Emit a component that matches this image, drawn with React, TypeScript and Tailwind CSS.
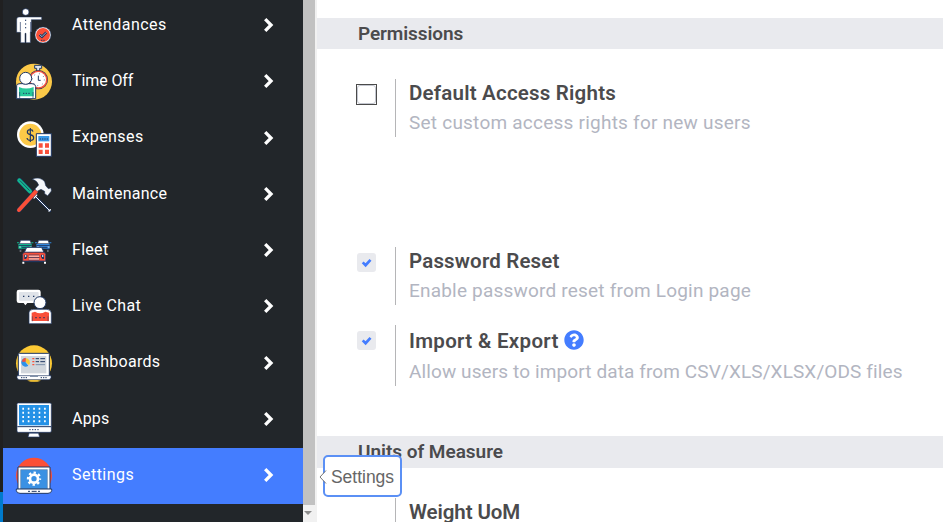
import type { ReactNode } from "react";
import { FaQuestionCircle } from "react-icons/fa";

const NAVY = "#1f3763";

const Icon = ({ top, children }: { top: number; children: ReactNode }) => (
  <svg viewBox={`48 ${top} 108 108`} className="h-9 w-9 shrink-0 overflow-visible">
    {children}
  </svg>
);

const AttendanceIcon = () => (
  <Icon top={24}>
    <circle cx="77" cy="36" r="10" fill="#fff" stroke={NAVY} strokeWidth="2" />
    <path d="M57 51H125V59H94V96H91V128H78V100H75V128H62V97H50V59Q50 51 57 51Z" fill="#fff" stroke={NAVY} strokeWidth="1.5" strokeLinejoin="round" />
    <path d="M61 66V94M92 66V96" stroke={NAVY} strokeWidth="2" />
    <path d="M77 59V63M77 70V74M77 81V85" stroke={NAVY} strokeWidth="3" />
    <circle cx="129" cy="105" r="24" fill="#fff" stroke={NAVY} strokeWidth="1.5" />
    <circle cx="129" cy="105" r="21" fill="#fb4f37" />
    <path d="M119 104L126 110L139 97" fill="none" stroke={NAVY} strokeWidth="8" />
    <path d="M119 104L126 110L139 97" fill="none" stroke="#bfc6ce" strokeWidth="2.5" />
    <path d="M123 121H135" stroke={NAVY} strokeWidth="3" strokeDasharray="3 2" />
  </Icon>
);

const TimeOffIcon = () => (
  <Icon top={193}>
    <circle cx="102" cy="246" r="54" fill="#fcc948" />
    <path d="M104 197H125V206H119V214H110V206H104Z" fill="#dfe5ef" stroke={NAVY} strokeWidth="3" />
    <circle cx="115" cy="240" r="29" fill={NAVY} />
    <circle cx="115" cy="240" r="27.5" fill="#f5523d" />
    <circle cx="115" cy="240" r="23" fill="#fff" />
    <path d="M115 228V242H122" fill="none" stroke={NAVY} strokeWidth="3" />
    <circle cx="115" cy="240" r="18" fill="none" stroke={NAVY} strokeWidth="3" strokeDasharray="2 12.1" />
    <path d="M50 297V258Q50 252 60 252H96Q106 252 107 260V297Z" fill="#fff" stroke={NAVY} strokeWidth="3" />
    <path d="M57 262Q78 271 101 262V290H57Z" fill="#27c99b" />
    <path d="M59 277V296M99 277V296" stroke={NAVY} strokeWidth="2" />
    <path d="M69 281H89" stroke={NAVY} strokeWidth="3" strokeDasharray="4 4" />
    <circle cx="77" cy="236" r="18" fill="#fff" stroke={NAVY} strokeWidth="3" />
  </Icon>
);

const ExpensesIcon = () => (
  <Icon top={32}>
    <circle cx="91" cy="73" r="40" fill="#fff" />
    <circle cx="91" cy="73" r="33" fill="#fcc948" />
    <path d="M99 64Q98 58 91 58Q82 58 82 65Q82 71 91 73Q101 75 101 82Q101 90 91 90Q82 90 81 83M91 53V95" fill="none" stroke={NAVY} strokeWidth="3.5" />
    <path d="M109 70H154V138H109Z" fill="#fff" stroke={NAVY} strokeWidth="3" />
    <path d="M115 77H148V93H115Z" fill="#3899e8" />
    <path d="M119 86H144" stroke={NAVY} strokeWidth="3" strokeDasharray="4 3" />
    <path d="M116 99H128V112H116ZM135 99H147V112H135ZM116 118H128V131H116ZM135 118H147V131H135Z" fill="#f9503b" />
  </Icon>
);

const MaintenanceIcon = () => (
  <Icon top={201}>
    <g strokeLinecap="round" fill="none">
      <path d="M58 211L90 244" stroke={NAVY} strokeWidth="15" />
      <path d="M58 211L90 244" stroke="#12b98d" strokeWidth="12" />
      <path d="M60 212L88 241" stroke={NAVY} strokeWidth="2.5" />
      <path d="M103 256L150 303" stroke={NAVY} strokeWidth="7" />
      <path d="M103 256L148 301" stroke="#fff" strokeWidth="3" />
      <path d="M102 264L110 255M147 303L151 299" stroke="#fff" strokeWidth="4" />
      <path d="M57 300L108 244" stroke={NAVY} strokeWidth="14" />
      <path d="M57 300L108 244" stroke="#fb4f37" strokeWidth="12" />
    </g>
    <path d="M97 208Q119 198 134 215L137 227L145 236L153 234L154 243L143 257L134 251V244L123 238L111 244L105 237L116 225Q111 211 97 208Z" fill="#f5f7fa" stroke={NAVY} strokeWidth="1.5" />
  </Icon>
);

const SmallCar = ({ x, color }: { x: number; color: string }) => (
  <g transform={`translate(${x} 0)`}>
    <path d="M7 71L11 61H39L43 71Z" fill="#fff" stroke={NAVY} strokeWidth="2" />
    <path d="M4 72H44V86H4ZM0 67H6V70H0ZM43 67H49V70H43Z" fill={color} />
    <path d="M4 77H44M14 83H38M7 89H15M35 89H43" stroke={NAVY} strokeWidth="3" />
    <path d="M6 81H12M38 81H44M8 93H13M36 93H41" stroke="#fff" strokeWidth="2" />
  </g>
);

const FleetIcon = () => (
  <Icon top={39}>
    <SmallCar x={51} color="#12b98d" />
    <SmallCar x={105} color="#3288df" />
    <path d="M73 97L80 82H125L132 97Z" fill="#fff" stroke={NAVY} strokeWidth="3" />
    <path d="M68 103Q68 97 76 97H129Q137 97 137 103V123H68Z" fill="#f9503b" stroke={NAVY} strokeWidth="2" />
    <path d="M86 105H118M85 112.500H119M86 120H118" stroke={NAVY} strokeWidth="2" />
    <path d="M87 108.500H117M87 117H117" stroke="#fff" strokeWidth="2.5" />
    <path d="M73 104H82V111L78 117H73ZM123 104H132V117H127L123 111Z" fill={NAVY} />
    <path d="M75 106H79V110H75ZM126 106H130V110H126ZM67 125H73V131H67ZM132 125H138V131H132Z" fill="#fff" />
    <path d="M73 125H132" stroke={NAVY} strokeWidth="3" />
  </Icon>
);

const ChatIcon = () => (
  <Icon top={208}>
    <path d="M57 210H115Q122 210 122 217V243Q122 250 115 250H82L76 257L71 250H57Q50 250 50 243V217Q50 210 57 210Z" fill="#fff" />
    <rect x="57" y="217" width="59" height="26" rx="3" fill="#dfe3e9" />
    <path d="M69 230H103" stroke={NAVY} strokeWidth="4" strokeDasharray="4 11" />
    <path d="M87 312V279Q88 270 99 269H141Q153 270 154 280V312Z" fill="#fff" stroke={NAVY} strokeWidth="2" />
    <path d="M95 279L105 276Q120 285 136 276L147 279V304H95Z" fill="#f9503b" />
    <path d="M97 290V305M144 290V305" stroke={NAVY} strokeWidth="1.5" />
    <path d="M106 294H136" stroke={NAVY} strokeWidth="4" strokeDasharray="4 8" />
    <circle cx="120" cy="249" r="18" fill="#fff" stroke={NAVY} strokeWidth="3" />
  </Icon>
);

const DashboardIcon = () => (
  <Icon top={47}>
    <circle cx="102" cy="99" r="54" fill="#fcc934" />
    <rect x="55" y="69" width="93" height="70" rx="3" fill="#fff" stroke={NAVY} strokeWidth="3" />
    <path d="M63 77H139V129H63Z" fill="#d1d6dc" />
    <path d="M77 96V83A13 13 0 1 0 85 106Z" fill="#2f91e8" />
    <path d="M77 96V83A13 13 0 0 1 87 104Z" fill="#fcc934" />
    <path d="M77 82A14 14 0 0 0 66 94H77Z" fill="#fb4f37" />
    <path d="M97 85H103M97 94H103M97 103H103" stroke="#fb4f37" strokeWidth="4" />
    <path d="M107 85H117M107 94H117M121 85H135M121 94H135" stroke={NAVY} strokeWidth="3" />
    <path d="M107 103H135" stroke="#7a8fa9" strokeWidth="3" />
    <path d="M51 136H153V142Q152 148 145 148H59Q52 148 51 142Z" fill="#fff" stroke={NAVY} strokeWidth="2" />
    <path d="M90 136H114V140H90Z" fill="#8292ab" />
    <path d="M63 142H81M122 142H143" stroke={NAVY} strokeWidth="3" strokeDasharray="4 3" />
    <path d="M82 151H123Q102 158 82 151" fill="#fcc934" />
  </Icon>
);

const AppsIcon = () => (
  <Icon top={216}>
    <rect x="51" y="219" width="103" height="88" rx="4" fill="#fff" stroke={NAVY} strokeWidth="2" />
    <path d="M57 225H147V286H57Z" fill="#2491e6" />
    <path d="M52 290H153" stroke={NAVY} strokeWidth="3" />
    <g stroke="#fff" strokeWidth="6">
      {[236, 248, 261, 274].map((y) => (
        <path key={y} d={`M67 ${y}H138`} strokeDasharray="5 11.3" />
      ))}
    </g>
    <path d="M88 299H117" stroke={NAVY} strokeWidth="3" strokeDasharray="4 4" />
    <path d="M88 308H115L119 321H84Z" fill="#fff" stroke={NAVY} strokeWidth="2" />
    <path d="M88 309H115" stroke={NAVY} strokeWidth="3" />
  </Icon>
);

const SettingsIcon = () => (
  <Icon top={84}>
    <circle cx="102" cy="137" r="54" fill="#fb4f37" />
    <path d="M48 160H156V192H48Z" fill="#447dff" />
    <path d="M54 111H150V178H54Z" fill="#fff" stroke={NAVY} strokeWidth="3" />
    <path d="M62 119H142V177H62Z" fill="#3b91e3" stroke="#6787a9" strokeWidth="2" />
    <circle cx="102" cy="146" r="12" fill="none" stroke="#fff" strokeWidth="8" />
    <circle cx="102" cy="146" r="18" fill="none" stroke="#fff" strokeWidth="7" strokeDasharray="7.07 7.07" strokeDashoffset="3.5" />
    <path d="M49 177H155V182Q154 190 144 190H60Q50 190 49 182Z" fill="#fff" stroke={NAVY} strokeWidth="3" />
    <path d="M84 184H90M95 184H110M114 184H120" stroke={NAVY} strokeWidth="3" />
  </Icon>
);

const menu = [
  { label: "Attendances", icon: <AttendanceIcon />, track: "tracking-[0.44px]" },
  { label: "Time Off", icon: <TimeOffIcon />, track: "tracking-[-0.1px]" },
  { label: "Expenses", icon: <ExpensesIcon />, track: "tracking-[0.4px]" },
  { label: "Maintenance", icon: <MaintenanceIcon />, track: "tracking-[0.26px]" },
  { label: "Fleet", icon: <FleetIcon />, track: "tracking-[0.3px]" },
  { label: "Live Chat", icon: <ChatIcon />, track: "tracking-[0.37px]" },
  { label: "Dashboards", icon: <DashboardIcon />, track: "tracking-[0.26px]" },
  { label: "Apps", icon: <AppsIcon />, track: "tracking-[0.2px]" },
  { label: "Settings", icon: <SettingsIcon />, track: "tracking-[0.47px]" },
];

const Sidebar = () => (
  <nav className="h-full w-[300px] shrink-0 overflow-hidden bg-[#22262a]">
    <div className="-mt-[2px]">
      {menu.map(({ label, icon, track }) => (
        <div
          key={label}
          className={`flex h-[56.25px] items-center pr-[29px] pl-[13px] text-white ${label === "Settings" ? "bg-[#447dff]" : ""}`}
        >
          {icon}
          <span className={`-mt-[2.5px] ml-5 grow text-base whitespace-nowrap ${track}`}>{label}</span>
          <svg viewBox="0 0 11 16" className="-mt-[2px] h-4 w-[11px]">
            <path d="M2.200 2.200L8 8L2.200 13.800" fill="none" stroke="#fff" strokeWidth="3.3" />
          </svg>
        </div>
      ))}
    </div>
  </nav>
);

const Checked = () => (
  <span className="flex h-[19px] w-[19px] rounded-[3px] bg-[#e9eaee]">
    <svg viewBox="0 0 19 19" className="h-[19px] w-[19px]">
      <path d="M5.700 9.400L8.600 12.200L13.500 6.900" fill="none" stroke="#447dff" strokeWidth="2.7" />
    </svg>
  </span>
);

const Unchecked = () => (
  <span className="-mt-px -ml-px flex h-[21px] w-[21px] border border-[#4a4a4a] bg-white">
    <span className="grow rounded-[3px] border border-[#c4c7d0]" />
  </span>
);

type SettingProps = {
  title: string;
  text?: string;
  box?: ReactNode;
  height: string;
  titleTrack: string;
  textTrack?: string;
  help?: boolean;
};

const Setting = ({ title, text, box, height, titleTrack, textTrack = "", help }: SettingProps) => (
  <div className={`flex pl-10 ${height}`}>
    <div className="w-[38px] shrink-0 pt-[6px]">{box}</div>
    <div className="border-l border-[#b5b5b7] pl-[13px] whitespace-nowrap">
      <div className={`flex items-center gap-[5px] ${help ? "h-[31px]" : "h-7"}`}>
        <span className={`text-[20.5px] leading-7 font-semibold text-[#4b4b4d] ${titleTrack}`}>{title}</span>
        {help && <FaQuestionCircle className="mb-px h-5 w-5 text-[#447dff]" />}
      </div>
      {text && <div className={`text-[19px] leading-8 text-[#b2b5c1] ${textTrack}`}>{text}</div>}
    </div>
  </div>
);

const Band = ({ title, height, track }: { title: string; height: string; track: string }) => (
  <h2 className={`flex items-center bg-[#e9eaee] pl-[41px] text-[19px] font-semibold text-[#4b4b4d] ${height} ${track}`}>
    {title}
  </h2>
);

export default function App() {
  return (
    <div className="relative flex h-[522px] w-[943px] overflow-hidden bg-white font-[Roboto,'Noto_Sans',sans-serif]">
      <div className="flex w-[3px] shrink-0 flex-col bg-[#202021]">
        <div className="mt-auto h-[30px] bg-[#007acc]" />
      </div>
      <Sidebar />
      <div className="flex w-[14px] shrink-0 flex-col bg-[#f1f1f1]">
        <div className="h-[505px] w-3 bg-[#c1c1c1]" />
        <svg viewBox="0 0 14 17" className="h-[17px] w-[14px]">
          <path d="M1 6H9L5 10Z" fill="#8b8b8b" />
        </svg>
      </div>
      <main className="grow pt-[18px]">
        <Band title="Permissions" height="h-[31px] pt-px" track="tracking-[-0.1px]" />
        <div className="h-[30px]" />
        <Setting title="Default Access Rights" text="Set custom access rights for new users" box={<Unchecked />} height="h-[58px]" titleTrack="tracking-[0.21px]" textTrack="tracking-[0.23px]" />
        <div className="h-[110px]" />
        <Setting title="Password Reset" text="Enable password reset from Login page" box={<Checked />} height="h-[58px]" titleTrack="tracking-[0.17px]" textTrack="tracking-[0.2px]" />
        <div className="h-5" />
        <Setting title="Import & Export" text="Allow users to import data from CSV/XLS/XLSX/ODS files" box={<Checked />} height="h-[61px]" titleTrack="tracking-[0.32px]" textTrack="tracking-[0.11px]" help />
        <div className="h-[50px]" />
        <Band title="Units of Measure" height="h-[32px]" track="tracking-[-0.03px]" />
        <div className="h-[30px]" />
        <Setting title="Weight UoM" height="h-[58px]" titleTrack="tracking-[-0.1px]" />
      </main>
      <div className="absolute top-[455px] left-[323px] flex h-[42px] w-[79px] items-center justify-center rounded-[5px] border-2 border-[#5b90f5] bg-white pt-[3px] font-['Liberation_Sans',Arial,sans-serif] text-[17.5px] text-[#666]">
        Settings
        <svg viewBox="0 0 8 16" className="absolute top-[12px] -left-[6px] h-4 w-2">
          <path d="M8 1L1 8L8 15Z" fill="#fff" />
          <path d="M7 1.500L1 8L7 14.500" fill="none" stroke="#777" strokeWidth="1" />
        </svg>
      </div>
    </div>
  );
}
